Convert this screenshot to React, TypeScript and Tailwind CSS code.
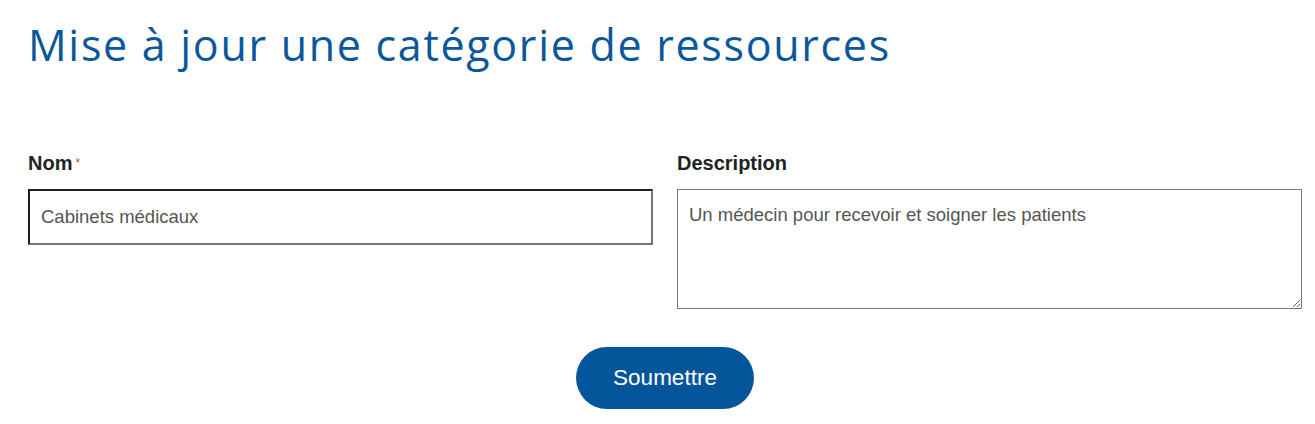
import React from "react";

export default function App() {
  return (
    <div className="w-[1315px] h-[424px] bg-white pl-[28px] pr-[13px] overflow-hidden" style={{ fontFamily: '"Liberation Sans", Arial, sans-serif' }}>
      <h1
        className="pt-[15px] text-[43px] leading-[60px] text-[#0b579b] tracking-[1.7px]"
        style={{ fontFamily: '"Open Sans", sans-serif', fontWeight: 400 }}
      >
        Mise à jour une catégorie de ressources
      </h1>
      <form className="mt-[76px]">
        <div className="flex gap-[24px]">
          <div className="flex-1">
            <label className="block text-[20px] leading-[24px] font-bold text-[#222]">
              Nom<span className="ml-[3px] align-top text-[12px] font-normal text-[#c8502a]">*</span>
            </label>
            <input
              defaultValue="Cabinets médicaux"
              className="mt-[14px] block w-full h-[56px] px-[11px] text-[18.5px] text-[#555] border-2 border-t-[#1f1f1f] border-l-[#1f1f1f] border-r-[#767676] border-b-[#767676] outline-none"
            />
          </div>
          <div className="flex-1">
            <label className="block text-[20px] leading-[24px] font-bold text-[#222]">Description</label>
            <textarea
              defaultValue="Un médecin pour recevoir et soigner les patients"
              className="mt-[14px] block w-full h-[120px] px-[11px] py-[13px] text-[18.5px] leading-[24px] text-[#555] border border-[#767676] outline-none resize-y"
            />
          </div>
        </div>
        <div className="flex justify-center mt-[38px]">
          <button
            type="button"
            className="w-[178px] h-[62px] rounded-full bg-[#03569a] text-white text-[22.5px]"
          >
            Soumettre
          </button>
        </div>
      </form>
    </div>
  );
}
